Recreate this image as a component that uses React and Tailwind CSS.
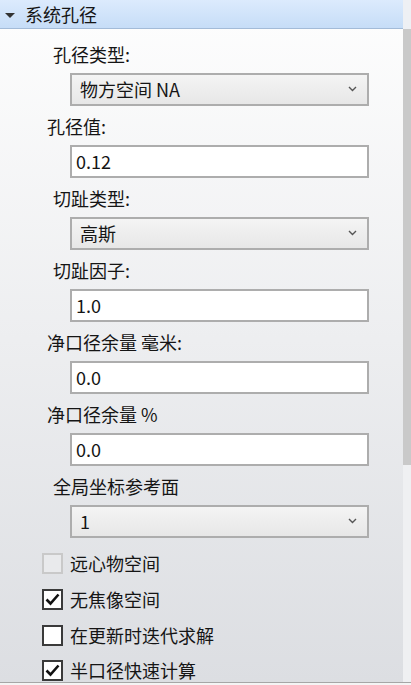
import React from "react";

const font = { fontFamily: '"Noto Sans CJK SC", "Noto Sans", sans-serif' };

function Chevron() {
  return (
    <svg width="9" height="6" viewBox="0 0 9 6" className="shrink-0">
      <polyline points="1,1 4.5,4.5 8,1" fill="none" stroke="#555" strokeWidth="1.4" />
    </svg>
  );
}

function Label({ text, indent }) {
  return (
    <div className={`h-[39px] flex items-center text-[18px] leading-none text-[#151515] ${indent ? "pl-[53px]" : "pl-[47px]"}`}>
      {text}
    </div>
  );
}

function Select({ value }) {
  return (
    <div className="ml-[70px] w-[299px] h-[33px] border-2 border-[#adadad] bg-gradient-to-b from-[#f4f4f4] to-[#e7e7e7] flex items-center justify-between pl-[8px] pr-[10px] pb-[1px] text-[18px] leading-none text-[#151515]">
      <span>{value}</span>
      <Chevron />
    </div>
  );
}

function Input({ value }) {
  return (
    <div className="ml-[70px] w-[299px] h-[33px] border-2 border-[#adadad] bg-white flex items-center pl-[4px] pb-[2px] text-[18px] leading-none text-[#151515]">
      {value}
    </div>
  );
}

function Check({ label, checked, disabled, h = "h-[36px]" }) {
  return (
    <div className={`${h} flex items-center pl-[42px]`}>
      <div
        className={`w-[21px] h-[21px] border-2 flex items-center justify-center ${
          disabled ? "border-[#c9c9c9] bg-[#e9eaec]" : "border-[#3a3a3a] bg-white"
        }`}
      >
        {checked && (
          <svg width="15" height="13" viewBox="0 0 15 13">
            <path d="M1.5 6.5 L5.5 10.5 L13.5 1.5" fill="none" stroke="#111" strokeWidth="2.6" />
          </svg>
        )}
      </div>
      <span className="ml-[7px] text-[18px] leading-none text-[#151515]">{label}</span>
    </div>
  );
}

export default function App() {
  return (
    <div className="w-[411px] h-[685px] overflow-hidden flex flex-col bg-[#f0f0f0]" style={font}>
      <div className="h-[682px] flex">
        <div className="flex-1 flex flex-col bg-gradient-to-b from-[#fefefe] to-[#dcdee2]">
          <div className="h-[29px] shrink-0 bg-gradient-to-b from-[#dcebfd] to-[#c6ddf7] border-b border-[#a3bbd8] flex items-center">
            <svg width="11" height="6" viewBox="0 0 11 6" className="ml-[5px] mt-[4px]">
              <polygon points="0,0 10,0 5,5" fill="#333" />
            </svg>
            <span className="ml-[9px] text-[18px] leading-none text-[#151515]">系统孔径</span>
          </div>
          <div className="pt-[5px] flex flex-col">
            <Label text="孔径类型:" indent />
            <Select value="物方空间 NA" />
            <Label text="孔径值:" />
            <Input value="0.12" />
            <Label text="切趾类型:" indent />
            <Select value="高斯" />
            <Label text="切趾因子:" indent />
            <Input value="1.0" />
            <Label text="净口径余量 毫米:" />
            <Input value="0.0" />
            <Label text="净口径余量 %" />
            <Input value="0.0" />
            <Label text="全局坐标参考面" indent />
            <Select value="1" />
            <div className="h-[7px]" />
            <Check label="远心物空间" disabled />
            <Check label="无焦像空间" checked />
            <Check label="在更新时迭代求解" />
            <Check label="半口径快速计算" checked h="h-[34px]" />
          </div>
        </div>
        <div className="w-[8px] flex flex-col">
          <div className="h-[29px] bg-[#eef0f4]" />
          <div className="h-[436px] bg-[#c9c9c9]" />
          <div className="flex-1 bg-[#eff0f2]" />
        </div>
      </div>
      <div className="h-[3px] border-t border-[#a6a6a6] bg-[#f4f4f4]" />
    </div>
  );
}
